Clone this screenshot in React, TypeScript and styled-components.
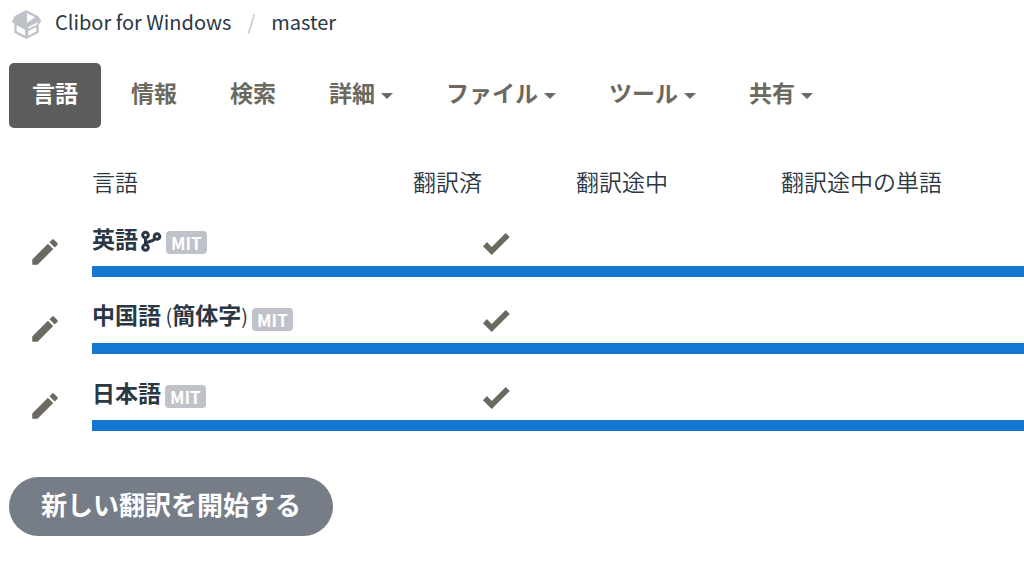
import React from "react";
import styled, { createGlobalStyle } from "styled-components";

const GlobalStyle = createGlobalStyle`
  *, *::before, *::after { box-sizing: border-box; }
  body {
    margin: 0;
    background: #fff;
    color: #2a3744;
    font-family: "Noto Sans CJK JP", "Noto Sans", sans-serif;
    font-size: 23px;
    line-height: 32px;
    overflow-x: hidden;
  }
`;

const Page = styled.div`
  padding-left: 9px;
`;

const Breadcrumb = styled.nav`
  display: flex;
  align-items: center;
  height: 47px;
  padding-bottom: 4px;
  font-size: 20px;
`;

const Crumb = styled.a`
  color: inherit;
  text-decoration: none;
`;

const Separator = styled.span`
  padding: 0 16px;
  color: #bfc3c7;
`;

const Logo = styled.svg`
  width: 32px;
  height: 32px;
  margin: 4px 13px 0 1px;
  flex: none;
`;

const Tabs = styled.nav`
  display: flex;
  gap: 7px;
  margin-top: 16px;
`;

const Tab = styled.button<{ $active?: boolean }>`
  display: flex;
  align-items: center;
  gap: 6px;
  height: 65px;
  padding: 0 23px 8px;
  border: 0;
  border-radius: 5px;
  background: ${(p) => (p.$active ? "#5c5c5c" : "transparent")};
  color: ${(p) => (p.$active ? "#fff" : "#6b6960")};
  font: inherit;
  font-weight: 700;
  white-space: nowrap;
`;

const Caret = styled.span`
  margin-top: 8px;
  border: 6px solid transparent;
  border-top-color: currentColor;
  border-bottom: 0;
`;

const Table = styled.table`
  width: 100%;
  margin-top: 36px;
  border-collapse: collapse;
  table-layout: fixed;
`;

const HeadCell = styled.th<{ $width?: number; $end?: number }>`
  width: ${(p) => (p.$width ? `${p.$width}px` : "auto")};
  height: 51px;
  padding: 1px ${(p) => p.$end ?? 0}px 0 0;
  text-align: ${(p) => (p.$end ? "right" : "left")};
  vertical-align: top;
  font-weight: 350;
  white-space: nowrap;
`;

const EditCell = styled.td`
  padding: 0 0 3px 19px;
  vertical-align: middle;
`;

const IconLink = styled.a`
  display: block;
  height: 34px;
  color: #6b6960;
`;

const Icon = styled.svg<{ $size: number }>`
  display: block;
  width: ${(p) => p.$size}px;
  height: ${(p) => p.$size}px;
  fill: currentColor;
`;

const NameCell = styled.th`
  height: 51px;
  padding: 0 0 6px;
  text-align: left;
  vertical-align: middle;
  font-weight: 400;
`;

const NameLine = styled.div`
  display: flex;
  align-items: center;
  white-space: nowrap;
`;

const LanguageLink = styled.a`
  margin-right: 4px;
  color: inherit;
  font-weight: 700;
  text-decoration: none;
`;

const Bracket = styled.span`
  font-size: 20px;
  font-weight: 400;
`;

const BranchMark = styled.svg`
  width: 22px;
  height: 22px;
  margin: 6px 4px 0 -2px;
  fill: none;
  stroke: currentColor;
  stroke-width: 3;
`;

const License = styled.span`
  height: 23px;
  margin-top: 9px;
  padding: 0 5px;
  border-radius: 4px;
  background: #bfc3c9;
  color: #fff;
  font-size: 17px;
  line-height: 23px;
  font-weight: 700;
`;

const StatCell = styled.td`
  padding: 4px 0 0;
  vertical-align: middle;
  color: #6b6960;
`;

const StatIcon = styled.div`
  display: flex;
  justify-content: flex-end;
  margin-right: -3px;
`;

const ProgressCell = styled.td`
  height: 26px;
  padding: 0;
  vertical-align: top;
`;

const ProgressTrack = styled.div`
  height: 11px;
  background: #e9eaec;
`;

const ProgressBar = styled.div`
  height: 100%;
  background: #1677d0;
`;

const StartButton = styled.button`
  height: 59px;
  margin-top: 31px;
  padding: 0 32px 6px;
  border: 0;
  border-radius: 30px;
  background: #767d86;
  color: #fff;
  font: inherit;
  font-size: 26px;
  font-weight: 700;
`;

const tabs = [
  { label: "言語", active: true },
  { label: "情報" },
  { label: "検索" },
  { label: "詳細", menu: true },
  { label: "ファイル", menu: true },
  { label: "ツール", menu: true },
  { label: "共有", menu: true },
];

const languages = [
  { name: "英語", source: true, percent: 100 },
  { name: "中国語", script: "簡体字", percent: 100 },
  { name: "日本語", percent: 100 },
];

const PENCIL =
  "M20.71,7.04C21.1,6.65 21.1,6 20.71,5.63L18.37,3.29C18,2.9 17.35,2.9 16.96,3.29L15.12,5.12L18.87,8.87M3,17.25V21H6.75L17.81,9.93L14.06,6.18L3,17.25Z";
const CHECK = "M9,20.42L2.79,14.21L5.62,11.38L9,14.77L18.88,4.88L21.71,7.71L9,20.42Z";

export default function App() {
  return (
    <Page>
      <GlobalStyle />
      <Breadcrumb>
        <Logo viewBox="12 12 96 96" aria-hidden="true">
          <path
            d="M61 18L26 36L17 54L25 59V86L61 105L98 86V62L106 50L97 37Z"
            fill="#bfc3c9"
          />
          <path
            d="M63 28L87 40L63 56ZM32 64L57 77V95L32 82ZM67 69L98 53L91 63L67 74ZM67 81L91 69V82L67 95Z"
            fill="#fff"
          />
        </Logo>
        <Crumb href="#">Clibor for Windows</Crumb>
        <Separator>/</Separator>
        <Crumb href="#">master</Crumb>
      </Breadcrumb>
      <Tabs>
        {tabs.map((t) => (
          <Tab key={t.label} $active={t.active} type="button">
            {t.label}
            {t.menu && <Caret />}
          </Tab>
        ))}
      </Tabs>
      <Table>
        <thead>
          <tr>
            <HeadCell as="td" $width={83} />
            <HeadCell scope="col">言語</HeadCell>
            <HeadCell scope="col" $width={137} $end={28}>翻訳済</HeadCell>
            <HeadCell scope="col" $width={186} $end={28}>翻訳途中</HeadCell>
            <HeadCell scope="col" $width={328} $end={82}>翻訳途中の単語</HeadCell>
          </tr>
        </thead>
        {languages.map((l) => (
          <tbody key={l.name}>
            <tr>
              <EditCell rowSpan={2}>
                <IconLink href="#" aria-label="翻訳">
                  <Icon $size={34} viewBox="0 0 24 24"><path d={PENCIL} /></Icon>
                </IconLink>
              </EditCell>
              <NameCell scope="row">
                <NameLine>
                  <LanguageLink href="#">
                    {l.name}
                    {l.script && (
                      <>
                        <Bracket> (</Bracket>
                        {l.script}
                        <Bracket>)</Bracket>
                      </>
                    )}
                  </LanguageLink>
                  {l.source && (
                    <BranchMark viewBox="0 0 22 22" aria-hidden="true">
                      <circle cx="5.5" cy="5" r="2.8" />
                      <circle cx="5.5" cy="17.5" r="2.8" />
                      <circle cx="17" cy="6.5" r="2.8" />
                      <path d="M5.5 8V15M6 13.5C8 10.500 12 12.500 15 8.500" />
                    </BranchMark>
                  )}
                  <License>MIT</License>
                </NameLine>
              </NameCell>
              <StatCell>
                <StatIcon>
                  <Icon $size={34} viewBox="0 0 24 24"><path d={CHECK} /></Icon>
                </StatIcon>
              </StatCell>
              <StatCell />
              <StatCell />
            </tr>
            <tr>
              <ProgressCell colSpan={4}>
                <ProgressTrack>
                  <ProgressBar style={{ width: `${l.percent}%` }} />
                </ProgressTrack>
              </ProgressCell>
            </tr>
          </tbody>
        ))}
      </Table>
      <StartButton type="button">新しい翻訳を開始する</StartButton>
    </Page>
  );
}
